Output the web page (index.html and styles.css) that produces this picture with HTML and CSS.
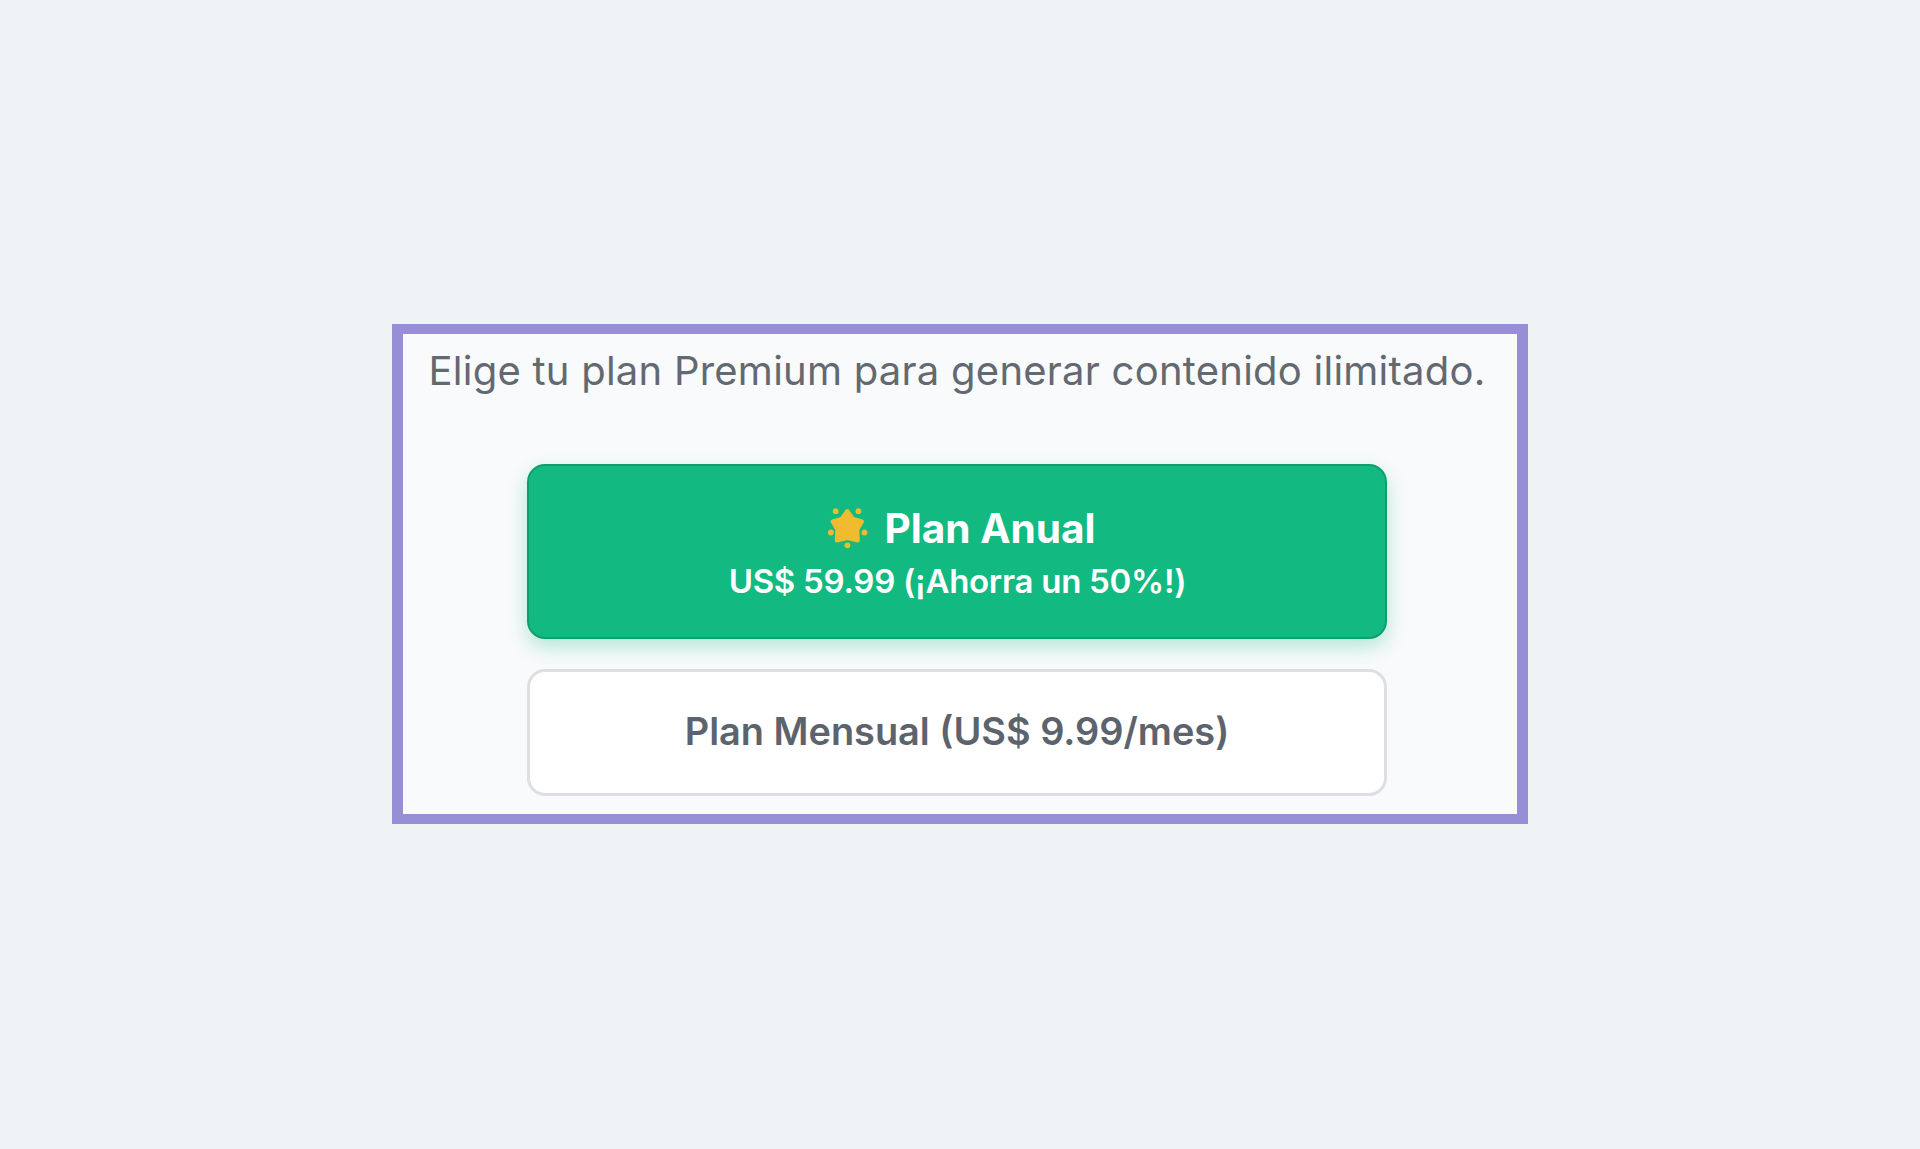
FILE: index.html
```html
<!DOCTYPE html>
<html lang="es">
<head>
    <meta charset="UTF-8">
    <meta name="viewport" content="width=device-width, initial-scale=1.0">
    <title>Plan Premium</title>
    <link rel="stylesheet" href="styles.css">
</head>
<body>
    <div class="container">
        <p class="intro">Elige tu plan Premium para generar contenido ilimitado.</p>
        <button type="button" class="plan annual">
            <span class="plan-title">
                <svg class="star" viewBox="0 0 40 42" aria-hidden="true">
                    <path d="M19.3 4 L25 12 L34 14.5 L29.3 22.6 L29.8 33.5 L19.3 31 L8.8 33.5 L9.3 22.6 L4.6 14.5 L13.6 12 Z"/>
                    <circle cx="7.7" cy="4.2" r="2.9"/>
                    <circle cx="30.4" cy="4.2" r="2.9"/>
                    <circle cx="2.9" cy="25.5" r="2.9"/>
                    <circle cx="36.4" cy="25.5" r="2.9"/>
                    <circle cx="19.4" cy="38.3" r="2.9"/>
                </svg>
                <span class="name">Plan Anual</span>
            </span>
            <span class="price">US$ 59.99 (¡Ahorra un 50%!)</span>
        </button>
        <button type="button" class="plan monthly">Plan Mensual (US$ 9.99/mes)</button>
    </div>
</body>
</html>
```
FILE: styles.css
```css
body {
    background-color: #eef3f6;
    font-family: Inter, sans-serif;
    display: flex;
    justify-content: center;
    align-items: center;
    height: 1148px;
    margin: 0;
}
.container {
    box-sizing: border-box;
    width: 1136px;
    height: 500px;
    padding: 13px 7px 0 0;
    border: 10px solid #978fd6;
    border-left-width: 11px;
    border-right-width: 11px;
    background-color: #f9fafc;
    display: flex;
    flex-direction: column;
    align-items: center;
}
.intro {
    margin: 0 0 69px;
    padding-left: 1px;
    font-size: 40px;
    line-height: 48px;
    letter-spacing: 0.24px;
    color: #636970;
    white-space: nowrap;
}
.plan {
    box-sizing: border-box;
    flex-shrink: 0;
    width: 860px;
    border-radius: 18px;
    font-family: inherit;
    cursor: pointer;
}
.annual {
    display: flex;
    flex-direction: column;
    align-items: center;
    height: 175px;
    margin-bottom: 30px;
    padding: 39px 0 0;
    border: 2px solid #109e6f;
    background-color: #12b981;
    box-shadow: 0 8px 20px rgba(16, 185, 129, 0.3);
    color: #fff;
}
.plan-title {
    display: flex;
    align-items: center;
    gap: 16px;
    padding-left: 11px;
    font-size: 40.6px;
    font-weight: 700;
    line-height: 48px;
}
.star {
    width: 40px;
    height: 42px;
    margin-top: -2px;
    fill: #f0bb2e;
}
.star path {
    stroke: #f0bb2e;
    stroke-width: 4;
    stroke-linejoin: round;
}
.price {
    margin-top: 8px;
    padding-left: 2px;
    font-size: 33px;
    font-weight: 600;
    line-height: 40px;
    letter-spacing: -0.28px;
}
.monthly {
    height: 127px;
    padding: 0 0 3px 1px;
    border: 3px solid #dcdfe3;
    background-color: #fff;
    color: #5d636d;
    font-size: 37.9px;
    font-weight: 600;
}
```
